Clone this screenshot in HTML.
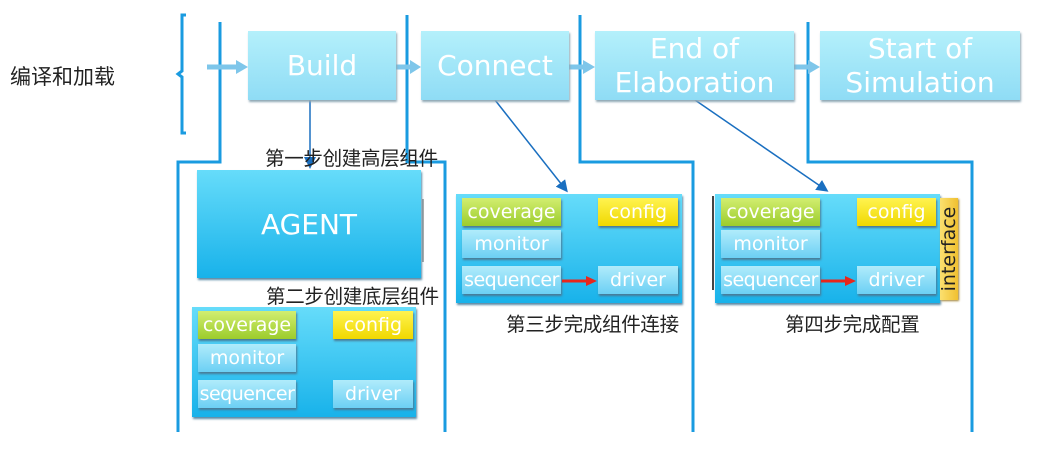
<!DOCTYPE html>
<html><head><meta charset="utf-8"><style>
body{margin:0;width:1038px;height:457px;background:#fff;position:relative;overflow:hidden;font-family:"Liberation Sans","Noto Sans CJK SC",sans-serif}
.a{position:absolute}
.top{position:absolute;background:linear-gradient(#b4f0fb,#8fdcf5);box-shadow:1px 2px 2px #8fa8b5;color:#fff;text-align:center;display:flex;align-items:center;justify-content:center;font-size:28px;line-height:34px;font-family:"DejaVu Sans",sans-serif}
.ct{position:absolute;background:linear-gradient(#66dcfa,#18b2ea);box-shadow:1px 2px 2px #5a8aa5}
.b{position:absolute;color:#fff;font-family:"DejaVu Sans",sans-serif;font-size:19px;text-align:center;line-height:28px;box-shadow:1px 2px 2px #4a7a95;height:28px;white-space:nowrap;overflow:visible}
.cov{background:linear-gradient(#d2ee70,#9ccc2c)}
.cfg{background:linear-gradient(#fff350,#f0d800)}
.blu{background:linear-gradient(#b0ecfb,#6cd0f4)}
.cn{position:absolute;font-size:19.5px;color:#222;font-family:"Noto Sans CJK SC",sans-serif;white-space:nowrap;letter-spacing:-0.3px}
</style></head><body>
<svg class="a" style="left:0;top:0" width="1038" height="457">
<defs><marker id="m" markerWidth="8" markerHeight="8" refX="6" refY="4" orient="auto"><path d="M0,0 L8,4 L0,8z" fill="#1a6fc0"/></marker></defs>
<g stroke="#1a9be0" stroke-width="3" fill="none">
<path d="M186,15 h-4 v56 l-4,3 l4,3 v56 h4"/>
<path d="M220,22 V162 H178 V432"/>
<path d="M178,162 H200"/>
<path d="M407,15 V162 H445 V432"/>
<path d="M580,15 V162 H693 V432"/>
<path d="M808,22 V162 H972 V432"/>
</g>
<g stroke="#7ec6ea" stroke-width="5">
<line x1="207" y1="67" x2="238" y2="67"/><line x1="396" y1="67" x2="412" y2="67"/><line x1="569" y1="67" x2="585" y2="67"/><line x1="794" y1="67" x2="810" y2="67"/></g>
<g fill="#7ec6ea"><path d="M236,60 L248,67 L236,74z"/><path d="M410,60 L421,67 L410,74z"/><path d="M583,60 L595,67 L583,74z"/><path d="M808,60 L820,67 L808,74z"/></g>
<g stroke="#1a6fc0" stroke-width="1.5" marker-end="url(#m)">
<line x1="310" y1="100" x2="310" y2="166"/><line x1="495" y1="100" x2="566" y2="190"/><line x1="695" y1="100" x2="826" y2="190"/></g>
<line x1="423" y1="199" x2="423" y2="262" stroke="#555" stroke-width="1"/>
<line x1="713" y1="196" x2="713" y2="290" stroke="#444" stroke-width="2"/>
</svg>
<div class="cn" style="left:10px;top:61px;font-size:21px;letter-spacing:0">编译和加载</div>
<div class="top" style="left:248px;top:31px;width:148px;height:69px">Build</div>
<div class="top" style="left:421px;top:31px;width:148px;height:69px">Connect</div>
<div class="top" style="left:595px;top:31px;width:199px;height:69px">End of<br>Elaboration</div>
<div class="top" style="left:820px;top:31px;width:200px;height:69px">Start of<br>Simulation</div>
<div class="ct" style="left:197px;top:170px;width:224px;height:108px;color:#fff;font-size:28px;font-family:'DejaVu Sans',sans-serif;display:flex;align-items:center;justify-content:center">AGENT</div>
<div class="cn" style="left:265px;top:142px">第一步创建高层组件</div>
<div class="cn" style="left:266px;top:280px">第二步创建底层组件</div>
<div class="cn" style="left:506px;top:308px">第三步完成组件连接</div>
<div class="cn" style="left:785px;top:308px">第四步完成配置</div>

<div class="ct" style="left:192px;top:307px;width:224px;height:110px"></div>
<div class="b cov" style="left:198px;top:311px;width:98px">coverage</div>
<div class="b cfg" style="left:333px;top:311px;width:80px">config</div>
<div class="b blu" style="left:198px;top:344px;width:98px">monitor</div>
<div class="b blu" style="left:198px;top:380px;width:98px;letter-spacing:-0.5px">sequencer</div>
<div class="b blu" style="left:333px;top:380px;width:80px">driver</div>

<div class="ct" style="left:456px;top:194px;width:226px;height:109px"></div>
<div class="b cov" style="left:462px;top:198px;width:99px">coverage</div>
<div class="b cfg" style="left:598px;top:198px;width:80px">config</div>
<div class="b blu" style="left:462px;top:230px;width:99px">monitor</div>
<div class="b blu" style="left:462px;top:266px;width:99px;letter-spacing:-0.5px">sequencer</div>
<div class="b blu" style="left:598px;top:266px;width:80px">driver</div>

<div class="ct" style="left:715px;top:194px;width:225px;height:109px"></div>
<div class="b cov" style="left:721px;top:198px;width:99px">coverage</div>
<div class="b cfg" style="left:857px;top:198px;width:79px">config</div>
<div class="b blu" style="left:721px;top:230px;width:99px">monitor</div>
<div class="b blu" style="left:721px;top:266px;width:99px;letter-spacing:-0.5px">sequencer</div>
<div class="b blu" style="left:857px;top:266px;width:79px">driver</div>
<div class="a" style="left:940px;top:198px;width:18px;height:102px;background:linear-gradient(90deg,#fbe070,#f0c030);box-shadow:1px 1px 2px #a08030"><div style="position:absolute;left:9px;top:51px;transform:translate(-50%,-50%) rotate(-90deg);font-family:'DejaVu Sans',sans-serif;font-size:19px;color:#222;white-space:nowrap">interface</div></div>

<svg class="a" style="left:0;top:0" width="1038" height="457">
<path d="M562,281 H588" stroke="#e8261c" stroke-width="3"/><path d="M586,276 L597,281 L586,286z" fill="#e8261c"/>
<path d="M821,281 H847" stroke="#e8261c" stroke-width="3"/><path d="M845,276 L856,281 L845,286z" fill="#e8261c"/>
</svg>
</body></html>
